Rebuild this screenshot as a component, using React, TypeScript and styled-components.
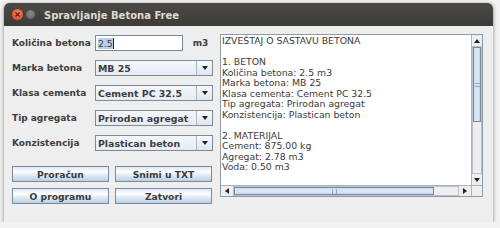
import styled, { createGlobalStyle } from "styled-components";

const GlobalStyle = createGlobalStyle`
  html, body {
    margin: 0;
    padding: 0;
    background: #f3f3f3;
  }
  body {
    font-family: "DejaVu Sans", "Liberation Sans", sans-serif;
  }
`;

const Window = styled.div`
  margin: 3px 0 0 4px;
  width: 489px;
  height: 219px;
  background: #eeeeee;
  border-radius: 5px 5px 0 0;
  box-shadow: 0 1px 4px rgba(0, 0, 0, 0.45);
  overflow: hidden;
  display: flex;
  flex-direction: column;
`;

const TitleBar = styled.div`
  height: 23px;
  flex-shrink: 0;
  display: flex;
  align-items: center;
  padding-left: 8px;
  background: linear-gradient(#4b4a46, #3c3b37);
  border-radius: 5px 5px 0 0;
`;

const WinButton = styled.span<{ $close?: boolean }>`
  width: ${(p) => (p.$close ? 11 : 9)}px;
  height: ${(p) => (p.$close ? 11 : 9)}px;
  border-radius: 50%;
  margin-right: ${(p) => (p.$close ? 3 : 9)}px;
  background: ${(p) =>
    p.$close
      ? "radial-gradient(circle at 50% 35%, #f6805c, #d9431c)"
      : "radial-gradient(circle at 50% 35%, #8b8a86, #5d5c58)"};
  display: flex;
  align-items: center;
  justify-content: center;
`;

const Title = styled.span`
  color: #dfdbd2;
  font-size: 10px;
  font-weight: bold;
  margin-top: 1px;
`;

const Body = styled.div`
  flex: 1;
  display: grid;
  grid-template-columns: 201px 263px;
  column-gap: 7px;
  padding: 8px 0 0 8px;
  align-items: start;
`;

const Form = styled.div`
  margin-top: 1px;
  display: flex;
  flex-direction: column;
`;

const FieldRow = styled.div`
  display: grid;
  grid-template-columns: 83px auto auto;
  align-items: center;
  height: 16px;
  margin-bottom: 9px;
  &:last-child {
    margin-bottom: 0;
  }
`;

const Label = styled.span`
  font-size: 9px;
  font-weight: bold;
  color: #3d3d3d;
  white-space: nowrap;
`;

const TextField = styled.div`
  width: 88px;
  height: 16px;
  box-sizing: border-box;
  border: 1px solid #7a8a99;
  background: #ffffff;
  display: flex;
  align-items: center;
  padding-left: 2px;
`;

const Selected = styled.span`
  font-size: 9.3px;
  color: #3d3d3d;
  background: #b8cfe5;
  line-height: 11px;
  border-right: 1px solid #222;
`;

const Unit = styled.span`
  font-size: 9px;
  font-weight: bold;
  color: #3d3d3d;
  margin-left: 5px;
`;

const Combo = styled.div`
  width: 118px;
  height: 16px;
  box-sizing: border-box;
  border: 1px solid #7a8a99;
  background: linear-gradient(#f3f6fa, #e6ecf3);
  display: flex;
  align-items: center;
`;

const ComboValue = styled.span`
  flex: 1;
  font-size: 9.4px;
  font-weight: bold;
  color: #3d3d3d;
  padding-left: 2px;
  white-space: nowrap;
`;

const ComboArrow = styled.span`
  width: 16px;
  height: 100%;
  box-sizing: border-box;
  border-left: 1px solid #a8b4c0;
  background: linear-gradient(#f8fafc, #dde6ef);
  display: flex;
  align-items: center;
  justify-content: center;
`;

const Triangle = styled.span<{ $dir: "up" | "down" | "left" | "right" }>`
  width: 0;
  height: 0;
  border-style: solid;
  border-color: transparent;
  ${(p) =>
    p.$dir === "down"
      ? "border-width: 4px 3.5px 0 3.5px; border-top-color: #222;"
      : p.$dir === "up"
      ? "border-width: 0 3.5px 4px 3.5px; border-bottom-color: #222;"
      : p.$dir === "left"
      ? "border-width: 3.5px 4px 3.5px 0; border-right-color: #222;"
      : "border-width: 3.5px 0 3.5px 4px; border-left-color: #222;"}
`;

const ButtonGrid = styled.div`
  margin-top: 6px;
  display: grid;
  grid-template-columns: 97px 97px;
  grid-auto-rows: 16px;
  gap: 6px;
`;

const Button = styled.div`
  box-sizing: border-box;
  border: 1px solid #7a8a99;
  background: linear-gradient(#dde8f3 0%, #ffffff 35%, #e6eef6 55%, #b8cfe5 100%);
  display: flex;
  align-items: center;
  justify-content: center;
  font-size: 9.2px;
  font-weight: bold;
  color: #3d3d3d;
`;

const Report = styled.div`
  height: 163px;
  box-sizing: border-box;
  border: 1px solid #8f9aa5;
  background: #ffffff;
  display: grid;
  grid-template-columns: 1fr 11px;
  grid-template-rows: 1fr 11px;
  overflow: hidden;
`;

const ReportText = styled.pre`
  margin: 0;
  padding: 1px 0 0 1px;
  font-family: "DejaVu Sans", "Liberation Sans", sans-serif;
  font-size: 9.3px;
  line-height: 10.5px;
  color: #3a3a3a;
  overflow: hidden;
`;

const VScroll = styled.div`
  display: flex;
  flex-direction: column;
  background: #eeeeee;
  border-left: 1px solid #a8b4c0;
`;

const HScroll = styled.div`
  display: flex;
  background: #eeeeee;
  border-top: 1px solid #a8b4c0;
`;

const ArrowButton = styled.span<{ $horizontal?: boolean }>`
  flex-shrink: 0;
  ${(p) => (p.$horizontal ? "width: 12px;" : "height: 11px;")}
  display: flex;
  align-items: center;
  justify-content: center;
  background: #eeeeee;
`;

const Track = styled.div<{ $horizontal?: boolean }>`
  flex: 1;
  display: flex;
  flex-direction: ${(p) => (p.$horizontal ? "row" : "column")};
  box-sizing: border-box;
  border: 1px solid #b9c2cb;
`;

const Thumb = styled.div<{ $horizontal?: boolean; $size: number }>`
  ${(p) => (p.$horizontal ? `width: ${p.$size}px;` : `height: ${p.$size}px;`)}
  flex-shrink: 0;
  box-sizing: border-box;
  border: 1px solid #7a8a99;
  background: ${(p) =>
    p.$horizontal
      ? "linear-gradient(#c9dbee, #dfe9f4 50%, #c6d9ec)"
      : "linear-gradient(90deg, #c9dbee, #dfe9f4 50%, #c6d9ec)"};
  display: flex;
  align-items: center;
  justify-content: center;
`;

const Grip = styled.span<{ $horizontal?: boolean }>`
  ${(p) =>
    p.$horizontal
      ? "width: 3px; height: 5px; border-left: 1px solid #8fa6be; border-right: 1px solid #8fa6be;"
      : "width: 5px; height: 2px; border-top: 1px solid #8fa6be; border-bottom: 1px solid #8fa6be;"}
`;

const Corner = styled.div`
  background: #eeeeee;
  border-left: 1px solid #a8b4c0;
  border-top: 1px solid #a8b4c0;
`;

const CloseMark = () => (
  <svg width="7" height="7" viewBox="0 0 7 7">
    <path d="M1.5 1.5 L5.5 5.5 M5.5 1.5 L1.5 5.5" stroke="#5a2612" strokeWidth="1.3" />
  </svg>
);

const fields = [
  { label: "Marka betona", value: "MB 25" },
  { label: "Klasa cementa", value: "Cement PC 32.5" },
  { label: "Tip agregata", value: "Prirodan agregat" },
  { label: "Konzistencija", value: "Plastican beton" },
];

const report = `IZVEŠTAJ O SASTAVU BETONA

1. BETON
Količina betona: 2.5 m3
Marka betona: MB 25
Klasa cementa: Cement PC 32.5
Tip agregata: Prirodan agregat
Konzistencija: Plastican beton

2. MATERIJAL
Cement: 875.00 kg
Agregat: 2.78 m3
Voda: 0.50 m3`;

const App = () => {
  return (
    <>
      <GlobalStyle />
      <Window>
        <TitleBar>
          <WinButton $close>
            <CloseMark />
          </WinButton>
          <WinButton />
          <Title>Spravljanje Betona Free</Title>
        </TitleBar>
        <Body>
          <Form>
            <FieldRow>
              <Label>Količina betona</Label>
              <TextField>
                <Selected>2.5</Selected>
              </TextField>
              <Unit>m3</Unit>
            </FieldRow>
            {fields.map((f) => (
              <FieldRow key={f.label}>
                <Label>{f.label}</Label>
                <Combo>
                  <ComboValue>{f.value}</ComboValue>
                  <ComboArrow>
                    <Triangle $dir="down" />
                  </ComboArrow>
                </Combo>
              </FieldRow>
            ))}
            <ButtonGrid>
              <Button>Proračun</Button>
              <Button>Snimi u TXT</Button>
              <Button>O programu</Button>
              <Button>Zatvori</Button>
            </ButtonGrid>
          </Form>
          <Report>
            <ReportText>{report}</ReportText>
            <VScroll>
              <ArrowButton>
                <Triangle $dir="up" />
              </ArrowButton>
              <Track>
                <Thumb $size={75}>
                  <Grip />
                </Thumb>
              </Track>
              <ArrowButton>
                <Triangle $dir="down" />
              </ArrowButton>
            </VScroll>
            <HScroll>
              <ArrowButton $horizontal>
                <Triangle $dir="left" />
              </ArrowButton>
              <Track $horizontal>
                <Thumb $horizontal $size={200}>
                  <Grip $horizontal />
                </Thumb>
              </Track>
              <ArrowButton $horizontal>
                <Triangle $dir="right" />
              </ArrowButton>
            </HScroll>
            <Corner />
          </Report>
        </Body>
      </Window>
    </>
  );
};

export default App;
